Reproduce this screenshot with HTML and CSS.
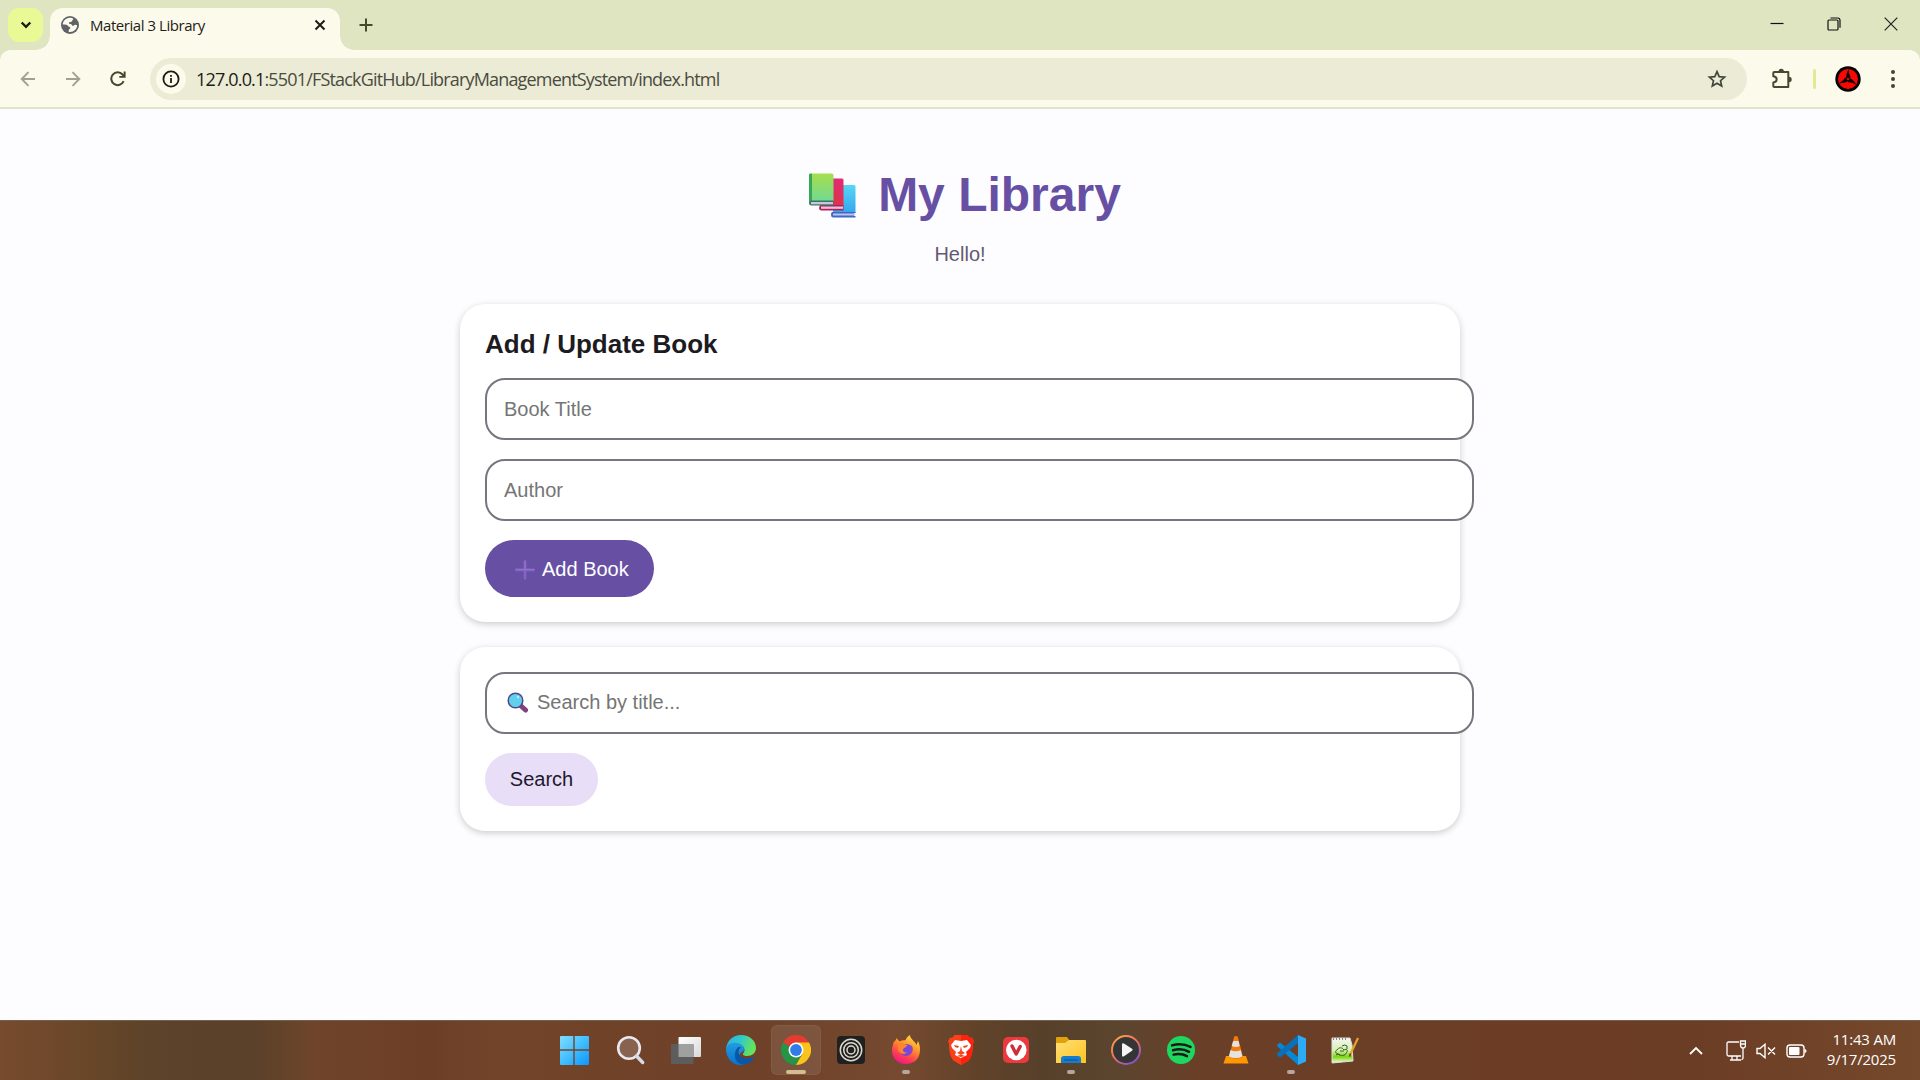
FILE: index.html
```html
<!DOCTYPE html>
<html lang="en">
<head>
<meta charset="utf-8">
<title>Material 3 Library</title>
<link rel="stylesheet" href="styles.css">
</head>
<body>
<header class="tabstrip">
  <button class="tab-search" aria-label="Search tabs"><svg width="12" height="8" viewBox="0 0 12 8"><path d="M1.7 1.5 6 5.8l4.3-4.3" fill="none" stroke="#1b1c14" stroke-width="2.4"/></svg></button>
  <div class="tab">
    <svg class="favicon" width="18" height="18" viewBox="0 0 18 18"><circle cx="9" cy="9" r="9" fill="#5f6368"/><path d="M8.6 1.8C5 2 1.8 5 1.8 8.6c2.6.1 4.6-.1 5 1.1.5 1.5 2.6.6 2.6 2.2 0 1-1.7 1-1.7 2.3v1.7c4.5.8 8.3-2.3 8.4-6.6-.8-.9-2.4-.9-3.1 0-.8.9-1.8.7-2.2-.4-.3-1-2-.5-2.7-1.3C7.400 6.700 8 5.900 9.500 5.900c1.700 0 1.500-1.800 2.900-3-1-.8-2.400-1.100-3.800-1.100Z" fill="#fcfaeb"/></svg>
    <span class="tab-title">Material 3 Library</span>
    <svg width="12" height="12" viewBox="0 0 12 12"><path d="m1.500 1.500 9 9m0-9-9 9" stroke="#1b1c14" stroke-width="2"/></svg>
  </div>
  <svg class="new-tab" width="14" height="14" viewBox="0 0 14 14"><path d="M7 .5v13M.5 7h13" stroke="#444a2a" stroke-width="2"/></svg>
  <div class="window-controls">
    <svg width="14" height="14" viewBox="0 0 14 14"><path d="M.5 6.500h13" stroke="#111" stroke-width="1.200"/></svg>
    <svg width="14" height="14" viewBox="0 0 14 14"><rect x="1" y="3" width="10" height="10" rx="1" fill="none" stroke="#111" stroke-width="1.200"/><path d="M3.500 1h7.300Q13 1 13 3.300v7.500" fill="none" stroke="#111" stroke-width="1.200"/></svg>
    <svg width="14" height="14" viewBox="0 0 14 14"><path d="m.7.7 12.600 12.600m0-12.600L.7 13.300" stroke="#222" stroke-width="1.200"/></svg>
  </div>
</header>
<div class="toolbar">
  <svg class="nav-icon faded" width="16" height="16" viewBox="0 0 16 16"><path d="M15 8H2M8.500 1.200 1.700 8l6.800 6.800" fill="none" stroke="#474a35" stroke-width="1.900"/></svg>
  <svg class="nav-icon faded" width="16" height="16" viewBox="0 0 16 16"><path d="M1 8h13M7.500 1.200 14.300 8l-6.800 6.800" fill="none" stroke="#474a35" stroke-width="1.900"/></svg>
  <svg class="nav-icon" width="16" height="16" viewBox="0 0 16 16"><path d="M13.600 10.200a6.400 6.400 0 1 1-1.100-6.700L14 5" fill="none" stroke="#42482b" stroke-width="2"/><path d="M15.600.5v6.300H9.300V4.900h4.300V.5z" fill="#42482b"/></svg>
  <div class="omnibox">
    <span class="site-info"><svg width="18" height="18" viewBox="0 0 18 18"><circle cx="9" cy="9" r="7.600" fill="none" stroke="#1b1c14" stroke-width="1.800"/><path d="M9 8v5M9 4.900v1.800" stroke="#1b1c14" stroke-width="1.800"/></svg></span>
    <span class="url"><b>127.0.0.1</b>:5501/FStackGitHub/LibraryManagementSystem/index.html</span>
    <svg class="star" width="20" height="20" viewBox="0 0 20 20"><path d="m10 2.600 2.200 5 5.400.5-4.100 3.600 1.200 5.300-4.700-2.800L5.300 17l1.200-5.300-4.100-3.600 5.400-.5z" fill="none" stroke="#42453a" stroke-width="1.700"/></svg>
  </div>
  <svg class="extensions" width="22" height="22" viewBox="0 0 22 22"><path d="M3.300 4h14v15h-14q-1 0-1-1v-3.600c4.500-.4 4.500-5.800 0-6.200V5q0-1 1-1Z" fill="none" stroke="#474a2e" stroke-width="2" stroke-linejoin="round"/><path d="M7.500 3.500a2.700 2.700 0 0 1 5.400 0zM18 8.800a2.700 2.700 0 0 1 0 5.400z" fill="#474a2e"/></svg>
  <span class="divider"></span>
  <svg class="avatar" width="26" height="26" viewBox="0 0 26 26"><circle cx="13" cy="13" r="12.700" fill="#050000"/><circle cx="13" cy="13" r="10" fill="#f80707"/><g fill="#090000"><path d="M11.300 13C11.200 9 11.400 6.500 14 3c-.3 3 0 4.800 1.500 8l-1 3z"/><path d="M11.300 13C11.200 9 11.400 6.500 14 3c-.3 3 0 4.800 1.500 8l-1 3z" transform="rotate(120 13 13)"/><path d="M11.300 13C11.200 9 11.400 6.500 14 3c-.3 3 0 4.800 1.500 8l-1 3z" transform="rotate(240 13 13)"/></g><circle cx="13" cy="13" r="1.300" fill="#e00606"/></svg>
  <svg class="menu-dots" width="4" height="18" viewBox="0 0 4 18"><g fill="#42452f"><circle cx="2" cy="2" r="2"/><circle cx="2" cy="9" r="2"/><circle cx="2" cy="16" r="2"/></g></svg>
</div>

<main class="page">
  <div class="title-row">
    <svg class="books" width="48" height="45" viewBox="0 0 48 45"><defs><linearGradient id="bg" x2="0" y2="1"><stop stop-color="#a6df4c"/><stop offset="1" stop-color="#72d993"/></linearGradient><linearGradient id="bb" x2="0" y2="1"><stop stop-color="#58d6f5"/><stop offset="1" stop-color="#35a5ee"/></linearGradient><linearGradient id="br" x2="0" y2="1"><stop stop-color="#e12b74"/><stop offset="1" stop-color="#df3347"/></linearGradient></defs>
      <path d="M25 12h21q1.500 0 1.500 1.500V40H25z" fill="url(#bb)"/><path d="M24 39h23.500v1H46v3h1.500v1.500H25q-2-.2-2-2.500t1-3z" fill="#386bc4"/><path d="M25 40.500h22v2H25z" fill="#c5c0ef"/>
      <path d="M13 5.500h21q1.500 0 1.500 1.500v26H13z" fill="url(#br)"/><path d="M12 32h23.500v5.500H13q-2-.2-2-2.500z" fill="#b52054"/><path d="M13 33.500h22v2.300H13z" fill="#e4c3e7"/>
      <path d="M4 .5h20q1.500 0 1.500 1.500v26H4z" fill="url(#bg)"/><path d="M1 1.500Q1 .5 2.500.5H4V28l-3 2z" fill="#39a856"/><path d="M4 27.500h21.500V32.500H3q-2-.2-2-2.500t3-2.500z" fill="#35795f"/><path d="M3 29h22v2.300H3z" fill="#d0c2e5"/></svg>
    <h1>My Library</h1>
  </div>
  <p class="greeting">Hello!</p>
  <section class="card">
    <h2>Add / Update Book</h2>
    <div class="field">Book Title</div>
    <div class="field">Author</div>
    <button class="btn btn-add"><svg width="20" height="20" viewBox="0 0 20 20"><path d="M10 .5v19M.5 10h19" stroke="#8661c8" stroke-width="2.600"/><path d="M10 .5v10M.5 9.300h19" stroke="#8e7ac8" stroke-width="1"/></svg>Add Book</button>
  </section>
  <section class="card">
    <div class="field field-search"><svg class="magnifier" width="21" height="21" viewBox="0 0 21 21"><path d="m14 14 4.500 4" stroke="#82417e" stroke-width="5" stroke-linecap="round"/><circle cx="8.500" cy="8.500" r="7.300" fill="#62cfef" stroke="#514986" stroke-width="1.500"/><circle cx="11" cy="5" r="1.200" fill="#bdefff"/></svg>Search by title...</div>
    <button class="btn btn-search">Search</button>
  </section>
</main>

<footer class="taskbar">
  <nav class="apps">
    <span class="app start"><svg width="30" height="30" viewBox="0 0 30 30"><defs><linearGradient id="win" x2="1" y2="1"><stop stop-color="#82dcff"/><stop offset=".5" stop-color="#42bfff"/><stop offset="1" stop-color="#0b95ff"/></linearGradient></defs><path d="M1 2q0-1 1-1h12.300v13.300H1zM15.700 1H29q1 0 1 1v12.300H15.700zM1 15.700h13.300V30H2q-1 0-1-1zM15.700 15.700H30V29q0 1-1 1H15.700z" fill="url(#win)"/></svg></span>
    <span class="app"><svg width="30" height="30" viewBox="0 0 30 30"><circle cx="13" cy="13" r="10.800" fill="#88624e" stroke="#e7e9ef" stroke-width="2.600"/><path d="m20.500 21 6.200 6.500" stroke="#d6dbe5" stroke-width="3.400" stroke-linecap="round"/></svg></span>
    <span class="app"><svg width="30" height="30" viewBox="0 0 30 30"><defs><linearGradient id="tv" x2="1" y2="1"><stop stop-color="#fff"/><stop offset="1" stop-color="#d9d9d9"/></linearGradient></defs><rect x="7.500" y="2" width="22.500" height="20" rx="1" fill="url(#tv)"/><rect y="9" width="22.500" height="20" rx="1" fill="#5d5d5d"/><path d="M7.500 9h15v13h-15z" fill="#a0a0a0"/></svg></span>
    <span class="app"><svg width="30" height="30" viewBox="0 0 30 30"><defs><linearGradient id="eg" x2="1" y2=".3"><stop stop-color="#2daee5"/><stop offset=".5" stop-color="#31c8cc"/><stop offset="1" stop-color="#65e55b"/></linearGradient><linearGradient id="eb" x2="0" y2="1"><stop stop-color="#239be0"/><stop offset="1" stop-color="#0872cf"/></linearGradient></defs><path d="M0 14C1 5.500 7 0 15 0c9 0 15 6 15 13 0 5-4 8-9 8-3 0-5-1.300-3.500-3 2.500-3 .5-8-5-8-5 0-10 1.500-12.500 4z" fill="url(#eg)"/><path d="M0 14c1-5 6-7 11-6 6 .8 8 5 6.500 8-3 2-5 3-4.500 7s3 6 5.500 6.500C9 32 0 25 0 14Z" fill="url(#eb)"/><path d="M12.500 12C8 15 7.500 24 12 27.500c5 3.500 12 2.500 16-5 0-1-1-.6-2 0-7 2.500-13.500-.5-13.500-5.500 0-2.500 1.500-4 3-4.500z" fill="#0b57a5"/></svg></span>
    <span class="app active"><svg width="30" height="30" viewBox="0 0 30 30"><path d="M15 15 2 7.500a15 15 0 0 1 26 0z" fill="#e53b30"/><path d="M15 15 2 7.500a15 15 0 0 0 13 22.500l6.500-11.200z" fill="#269447"/><path d="M15 7.500h13a15 15 0 0 1-13 22.500l6.500-11.200z" fill="#fcc31b"/><circle cx="15" cy="15" r="7.500" fill="#fff"/><circle cx="15" cy="15" r="5.900" fill="#327ce9"/></svg></span>
    <span class="app"><svg width="30" height="30" viewBox="0 0 30 30"><rect x="1" y="1" width="28" height="28" rx="4" fill="#202020"/><g fill="none" stroke="#dedbcc" stroke-width="1.500"><circle cx="15" cy="15" r="10.700"/><circle cx="15" cy="15" r="7.300"/><circle cx="15" cy="15" r="4"/></g></svg></span>
    <span class="app running"><svg width="30" height="30" viewBox="0 0 30 30"><defs><linearGradient id="ff" x1=".8" x2=".3" y2="1"><stop stop-color="#ffe548"/><stop offset=".4" stop-color="#ff9329"/><stop offset=".75" stop-color="#fc3c54"/><stop offset="1" stop-color="#ee158c"/></linearGradient></defs><path d="M5 5c0-1 .5-2 .5-2 1 1 2 2.500 3 3.500 2-1 4-1.500 6-1.200C15 3 17 1 19 0c0 4 5 6 6.500 10L27 6c2 4 2.500 8 1.700 12C27.500 25 22 29 15 29 6 29 1 22.500 1 16c0-4 1-6 1-6 0-2 1-4 3-5z" fill="url(#ff)"/><circle cx="15" cy="15" r="6" fill="#714adc"/><path d="M7 10c2-3 5-3 6-1l3 1c0 3-4 2-4 5 0 2 2 3 4 2-2 4-9 1-9-3z" fill="#ff852d"/><path d="m17 9 4 2c2 4 0 8-3 9l-2 1c3-4 4-8 1-12Z" fill="#9143c9"/></svg></span>
    <span class="app"><svg width="30" height="30" viewBox="0 0 30 30"><path d="M8.500 0h13L24 3l2-.5 2 4-1 2c0 9-2 15-5 17.500L15 30l-7-4C5 23.500 3 17.500 3 8.500l-1-2 2-4L6 3z" fill="#fb4019"/><path d="M15 0h6.500L24 3l2-.5 2 4-1 2c0 9-2 15-5 17.500L15 30z" fill="#ff220c"/><path d="m9 5 6 1 6-1 4 5-1 3-4 4 1 3-6 3-6-3 1-3-4-4-1-3z" fill="#fff"/><path d="m8 10 5 1-1 2-3-1zm14 0-5 1 1 2 3-1zm-7 1-1 5-3 2 4 2 4-2-3-2zm-4 10 4-1.500 4 1.500-4 1z" fill="#f44620"/></svg></span>
    <span class="app"><svg width="30" height="30" viewBox="0 0 30 30"><rect x="2" y="2" width="26" height="26" rx="5" fill="#ed393e"/><circle cx="15.300" cy="15" r="10.300" fill="#fff"/><path d="m11 11 4.200 8 4-7.500" fill="none" stroke="#cf2e36" stroke-width="3.400" stroke-linecap="round" stroke-linejoin="round"/></svg></span>
    <span class="app running"><svg width="30" height="30" viewBox="0 0 30 30"><defs><linearGradient id="fold" x2="1" y2="1"><stop stop-color="#ffdf78"/><stop offset="1" stop-color="#ffc31f"/></linearGradient></defs><path d="M0 3q0-1 1-1h10l3 4-2 4H0z" fill="#e1a10a"/><path d="M0 8h9l4-3h16q1 0 1 1v22H0z" fill="url(#fold)"/><path d="M5 28v-4q0-3 3-3h14q3 0 3 3v4z" fill="#157dcc"/><path d="M8 25h14" stroke="#095293" stroke-width="1"/></svg></span>
    <span class="app"><svg width="30" height="30" viewBox="0 0 30 30"><defs><linearGradient id="mp" x2=".7" y2="1"><stop stop-color="#ffab43"/><stop offset=".5" stop-color="#ed7359"/><stop offset="1" stop-color="#8953c9"/></linearGradient></defs><circle cx="15" cy="15" r="14" fill="#353535" stroke="url(#mp)" stroke-width="2"/><path d="M11 9.500q0-2 2-1l8 5.200q1.500 1 0 2l-8 5.600q-2 1-2-1z" fill="#f5f5f5"/></svg></span>
    <span class="app"><svg width="30" height="30" viewBox="0 0 30 30"><circle cx="15" cy="15" r="14" fill="#1dd75f"/><path d="M6 10.400c6-1.700 13-1.200 18.500 1.500M7 15.300c5.500-1.500 11.500-1 16 1.500M7.500 19.600c4.700-1 9.500-.7 13.500 1.600" fill="none" stroke="#17191a" stroke-width="2.500" stroke-linecap="round"/></svg></span>
    <span class="app"><svg width="30" height="30" viewBox="0 0 30 30"><path d="M5 21h20l2.500 7.500h-25z" fill="#ff9800"/><path d="M13.200 1.500q1.800-1 3.500 0L22 22q-7 4-14 0z" fill="#f57a06"/><path d="m12.200 6-1.500 5q4.500 2 8 0L17.400 6zM9.500 15l-1.700 6.500q7 3 13.600 0L19.700 15q-5 2.500-10.200 0z" fill="#e3e3e3"/></svg></span>
    <span class="app running"><svg width="30" height="30" viewBox="0 0 30 30"><path d="M1 10 4 7.500 22 22V30L1.500 11.500z" fill="#0589d7"/><path d="M1 20v-1.500L22 0v8L4 22.500z" fill="#0871bb"/><path d="M22 0 30 3.500V26.500L22 30z" fill="#2eaaf5"/></svg></span>
    <span class="app notes"><svg width="30" height="30" viewBox="0 0 30 30"><defs><linearGradient id="np" x2="0" y2="1"><stop stop-color="#f4f6f5"/><stop offset=".5" stop-color="#d7efb0"/><stop offset=".75" stop-color="#7cd50f"/><stop offset="1" stop-color="#f2ffe8"/></linearGradient></defs><path d="M3 3h18l2 7 1 16-21 2z" fill="url(#np)" stroke="#ddd"/><path d="M4 4h15" stroke="#666" stroke-width="1.500" stroke-dasharray="1 2"/><path d="M8 15c2-3 5-3 7 0 4-2 4 2 2 3 0 3-6 3-8 1-3-1-3-3-1-4m5-4q3-2 5 0v3M7 20q2-2 4 0m0-4h4" fill="none" stroke="#355f22" stroke-width="1"/><path d="m29 3-8 17" stroke="#e7a32c" stroke-width="2.200"/><path d="m21.500 18.500-1 3" stroke="#564121" stroke-width="1.500"/></svg></span>
  </nav>
  <div class="tray">
    <svg class="tray-up" width="14" height="9" viewBox="0 0 14 9"><path d="m1 8 6-6 6 6" fill="none" stroke="#fff" stroke-width="1.800"/></svg>
    <svg width="20" height="21" viewBox="0 0 20 21"><path d="M13 2H2.500Q1 2 1 3.500v11Q1 16 2.500 16H15M6 16v4m5-4v4M4 20h11" fill="none" stroke="#fff" stroke-width="1.300"/><path d="M14.500 1h5v4q0 3-2.500 3t-2.500-3zM17 8v10q0 1.500-1.500 1.500M14.500 4h5" fill="none" stroke="#fff" stroke-width="1.300"/></svg>
    <svg width="20" height="16" viewBox="0 0 20 16"><path d="M1 5.500h3L9 1.300v13.400l-5-4.200H1zM12 4.500l7 7m0-7-7 7" fill="none" stroke="#fff" stroke-width="1.400"/></svg>
    <svg width="21" height="14" viewBox="0 0 21 14"><rect x="1" y="1" width="17" height="12" rx="3" fill="none" stroke="#fff" stroke-width="1.400"/><rect x="3" y="3" width="10.500" height="8" rx="1" fill="#fff"/><path d="M18.500 5q2 0 2 2t-2 2z" fill="#fff"/></svg>
    <div class="clock"><span>11:43 AM</span><span>9/17/2025</span></div>
  </div>
</footer>
</body>
</html>
```
FILE: styles.css
```css
* { box-sizing: border-box; }
body {
  margin: 0;
  width: 1920px;
  height: 1080px;
  overflow: hidden;
  display: flex;
  flex-direction: column;
  background: #fdfdff;
  font-family: "Liberation Sans", Arial, sans-serif;
}
svg { display: block; flex: none; }
button { border: 0; padding: 0; font: inherit; }

/* Browser chrome */
.tabstrip {
  height: 50px;
  flex: none;
  display: flex;
  background: #e0e5c1;
  padding: 8px 13px 0 0;
}
.tab-search {
  width: 35px;
  height: 34px;
  margin: 0 7px 0 8px;
  border-radius: 11px;
  background: #e9f996;
  display: grid;
  place-items: center;
}
.tab {
  position: relative;
  width: 290px;
  height: 42px;
  padding: 0 14px 8px 11px;
  border-radius: 13px 13px 0 0;
  background: #fcfaeb;
  display: flex;
  align-items: center;
}
.tab::before, .tab::after {
  content: "";
  position: absolute;
  bottom: 0;
  width: 14px;
  height: 14px;
}
.tab::before { left: -14px; background: radial-gradient(circle at 0 0, transparent 13.5px, #fcfaeb 14px); }
.tab::after { right: -14px; background: radial-gradient(circle at 100% 0, transparent 13.5px, #fcfaeb 14px); }
.tab-title {
  flex: 1;
  margin-left: 11px;
  padding-bottom: 1px;
  font: 15px "Open Sans", "Noto Sans", sans-serif;
  letter-spacing: -0.45px;
  color: #1f2018;
  white-space: nowrap;
}
.new-tab { margin: 10px 0 0 19px; }
.window-controls { margin-left: auto; display: flex; gap: 43px; padding: 9px 9px 0 0; }
.toolbar {
  height: 59px;
  flex: none;
  display: flex;
  align-items: center;
  border-bottom: 2px solid #e3e2cb;
  background: radial-gradient(circle at 10px 10px, #fcfaeb 9.5px, #e0e5c1 10px) 0 0 / 10px 10px no-repeat,
    radial-gradient(circle at 0 10px, #fcfaeb 9.5px, #e0e5c1 10px) 100% 0 / 10px 10px no-repeat, #fcfaeb;
  padding: 0 25px 0 20px;
}
.nav-icon { margin-right: 29px; }
.faded { opacity: .5; }
.omnibox {
  width: 1597px;
  height: 42px;
  margin-left: -5px;
  border-radius: 21px;
  background: #ebebd6;
  display: flex;
  align-items: center;
  padding: 0 20px 0 6px;
}
.site-info {
  width: 30px;
  height: 30px;
  border-radius: 50%;
  background: #fcfaeb;
  display: grid;
  place-items: center;
}
.url {
  flex: 1;
  margin-left: 10px;
  font: 18px "Open Sans", "Noto Sans", sans-serif;
  letter-spacing: -0.83px;
  color: #4a4b40;
  white-space: nowrap;
}
.url b { font-weight: 400; color: #1b1c14; }
.extensions { margin-left: 24px; }
.divider { width: 3px; height: 20px; margin: 0 19px 0 20px; border-radius: 2px; background: #dfeb94; }
.avatar { margin-right: 30px; }

/* Library page */
.page { flex: 1; }
.title-row { display: flex; justify-content: center; align-items: center; height: 56px; margin-top: 58px; padding-left: 9px; }
.books { margin-right: 22px; }
h1 { margin: 0; font-size: 48px; line-height: 56px; color: #6750a4; }
.greeting { margin: 20px 0 38px; text-align: center; font-size: 20px; line-height: 23px; color: #625b71; }
.card {
  width: 1000px;
  margin: 0 auto 25px;
  padding: 25px;
  border-radius: 25px;
  background: #fff;
  box-shadow: 0 2px 7px rgba(0, 0, 0, .2);
}
h2 { margin: 0 0 19px; font-size: 26px; line-height: 30px; color: #1c1b1f; }
.field {
  width: 989px;
  height: 62px;
  margin-bottom: 19px;
  border: 2px solid #79747e;
  border-radius: 20px;
  background: #fff;
  padding: 0 17px;
  display: flex;
  align-items: center;
  font-size: 20px;
  color: #757575;
}
.field-search { padding-bottom: 2px; }
.magnifier { margin: 0 9px 0 3px; }
.btn { display: flex; align-items: center; font-size: 20px; border-radius: 29px; }
.btn-add { width: 169px; height: 57px; padding: 2px 0 0 30px; gap: 7px; background: #6750a4; color: #fff; }
.btn-search { width: 113px; height: 53px; justify-content: center; background: #e8def8; color: #1d192b; }

/* Desktop taskbar */
.taskbar {
  height: 60px;
  flex: none;
  display: grid;
  grid-template-columns: 1fr auto 1fr;
  border-top: 1px solid #75604c;
  background: linear-gradient(90deg, #774b2d 0, #70482b 50px, #654628 105px, #5c432a 150px, #5b402a 250px, #65442a 290px, #6f442a 310px, #6c3e26 430px, #72452b 500px, #704228 600px, #6f4129 760px, #754a30 900px, #604229 980px, #57402a 1040px, #5c452f 1120px, #6a3f28 1200px, #6c3d24 1500px, #6c3d25 1700px, #75492c 1920px);
}
.apps { grid-column: 2; display: flex; gap: 5px; padding: 4px 0 0 2px; }
.app {
  position: relative;
  width: 50px;
  height: 50px;
  border-radius: 6px;
  display: grid;
  place-items: center;
}
.start, .notes { padding-right: 4px; }
.active { background: rgba(255, 255, 255, .09); box-shadow: inset 0 0 0 1px rgba(255, 255, 255, .05); }
.active::after, .running::after {
  content: "";
  position: absolute;
  left: 21px;
  bottom: 1px;
  width: 8px;
  height: 4px;
  border-radius: 2px;
  background: #b7a69d;
}
.active::after { left: 15px; width: 20px; background: #d5bd91; }
.tray { justify-self: end; display: flex; align-items: center; gap: 10px; padding-right: 24px; }
.tray-up { margin-right: 13px; }
.clock {
  width: 69px;
  margin: 0 0 4px 10px;
  padding-right: 0;
  display: flex;
  flex-direction: column;
  align-items: flex-end;
  font: 15px/20px "Open Sans", "Noto Sans", sans-serif;
  letter-spacing: -0.2px;
  color: #fff;
  white-space: nowrap;
}
```
